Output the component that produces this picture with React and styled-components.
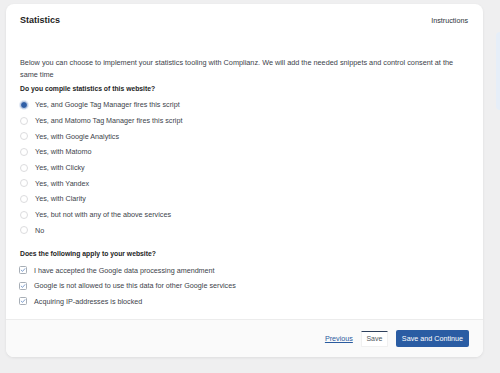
import React from "react";
import styled, { createGlobalStyle } from "styled-components";

const GlobalStyle = createGlobalStyle`
  html, body {
    margin: 0;
    padding: 0;
    background: #efeff0;
    font-family: "Liberation Sans", Arial, sans-serif;
    color: #2c3338;
  }
`;

const statsOptions = [
  "Yes, and Google Tag Manager fires this script",
  "Yes, and Matomo Tag Manager fires this script",
  "Yes, with Google Analytics",
  "Yes, with Matomo",
  "Yes, with Clicky",
  "Yes, with Yandex",
  "Yes, with Clarity",
  "Yes, but not with any of the above services",
  "No",
];

const applyOptions = [
  "I have accepted the Google data processing amendment",
  "Google is not allowed to use this data for other Google services",
  "Acquiring IP-addresses is blocked",
];

const App = () => {
  return (
    <>
      <GlobalStyle />
      <Page>
        <Card>
          <Header>
            <Title>Statistics</Title>
            <HeaderLink>Instructions</HeaderLink>
          </Header>
          <Body>
            <Description>
              Below you can choose to implement your statistics tooling with
              Complianz. We will add the needed snippets and control consent at
              the same time
            </Description>
            <Question>Do you compile statistics of this website?</Question>
            <List>
              {statsOptions.map((label, i) => (
                <Row key={label}>
                  <Radio $checked={i === 0} />
                  <span>{label}</span>
                </Row>
              ))}
            </List>
            <Question $spaced>Does the following apply to your website?</Question>
            <List>
              {applyOptions.map((label) => (
                <Row key={label}>
                  <Checkbox>
                    <svg viewBox="0 0 10 10" width="8" height="8">
                      <path
                        d="M2 5.2 L4.2 7.3 L8.2 2.8"
                        fill="none"
                        stroke="#3f70b6"
                        strokeWidth="1.1"
                        strokeLinecap="round"
                        strokeLinejoin="round"
                      />
                    </svg>
                  </Checkbox>
                  <span>{label}</span>
                </Row>
              ))}
            </List>
          </Body>
          <Footer>
            <LinkButton>Previous</LinkButton>
            <SecondaryButton>Save</SecondaryButton>
            <PrimaryButton>Save and Continue</PrimaryButton>
          </Footer>
        </Card>
        <Sidebar>
          <InfoBox />
        </Sidebar>
      </Page>
    </>
  );
};

export default App;

const Page = styled.div`
  display: flex;
  align-items: flex-start;
  gap: 13px;
  padding: 4px 0 0 6px;
  height: 373px;
  box-sizing: border-box;
  overflow: hidden;
`;

const Card = styled.div`
  flex: 0 0 477px;
  background: #fff;
  border-radius: 8px;
  box-shadow: 0 1px 3px rgba(0, 0, 0, 0.08);
  overflow: hidden;
`;

const Header = styled.div`
  height: 32px;
  padding: 0 14px;
  display: flex;
  align-items: center;
  justify-content: space-between;
`;

const Title = styled.h1`
  margin: 0;
  font-size: 9px;
  font-weight: 700;
  color: #1e1e1e;
`;

const HeaderLink = styled.span`
  font-size: 7.2px;
  color: #2c3338;
  margin-right: 1px;
`;

const Body = styled.div`
  padding: 21px 14px 10px;
`;

const Description = styled.p`
  margin: 0;
  max-width: 440px;
  font-size: 7.3px;
  line-height: 12px;
  color: #3c434a;
`;

const Question = styled.h2`
  margin: ${(p) => (p.$spaced ? "10px" : "2px")} 0 0;
  font-size: 6.8px;
  line-height: 12px;
  font-weight: 700;
  color: #1e1e1e;
`;

const List = styled.div`
  display: flex;
  flex-direction: column;
  margin-top: 2px;
`;

const Row = styled.div`
  height: 15.7px;
  display: flex;
  align-items: center;
  gap: 7px;
  font-size: 7.2px;
  color: #3c434a;
`;

const Radio = styled.span`
  width: 8px;
  height: 8px;
  box-sizing: border-box;
  border-radius: 50%;
  flex: none;
  border: 1px solid ${(p) => (p.$checked ? "#c6d3e8" : "#dcdcde")};
  background: ${(p) => (p.$checked ? "#2f5ea6" : "#fff")};
  box-shadow: ${(p) => (p.$checked ? "0 0 0 1px #e3eaf5" : "none")};
`;

const Checkbox = styled.span`
  width: 8px;
  height: 8px;
  box-sizing: border-box;
  flex: none;
  border: 1px solid #a7aeb6;
  border-radius: 1.5px;
  display: flex;
  align-items: center;
  justify-content: center;
  margin-left: -1px;

  svg {
    display: block;
  }
`;

const Footer = styled.div`
  height: 38px;
  background: #fafafa;
  border-top: 1px solid #ececec;
  box-sizing: border-box;
  padding: 0 14px;
  display: flex;
  align-items: center;
  justify-content: flex-end;
  gap: 8px;
`;

const LinkButton = styled.a`
  font-size: 7.2px;
  color: #2a5b9f;
  text-decoration: underline;
  cursor: pointer;
`;

const SecondaryButton = styled.button`
  height: 16px;
  width: 27px;
  padding: 0;
  font-family: inherit;
  font-size: 7px;
  color: #50575e;
  background: #fff;
  border: 1px solid #f0f0f0;
  border-top: 1px solid #2d3f5c;
  border-radius: 1px;
`;

const PrimaryButton = styled.button`
  height: 17px;
  padding: 0 6px;
  font-family: inherit;
  font-size: 7.2px;
  color: #fff;
  background: #2a5ca3;
  border: none;
  border-radius: 2px;
`;

const Sidebar = styled.div`
  flex: 1;
  padding-top: 28px;
`;

const InfoBox = styled.div`
  height: 78px;
  background: #e6eef8;
  border-radius: 4px 0 0 4px;
`;
